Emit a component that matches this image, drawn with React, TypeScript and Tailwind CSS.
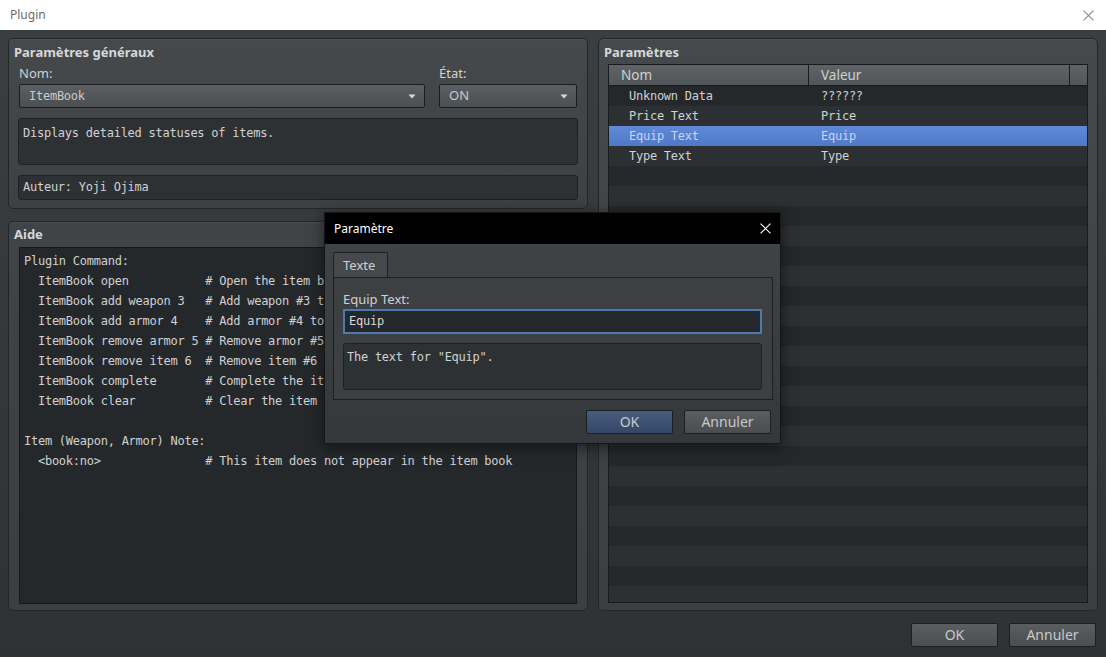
import React from "react";

const mono = "font-['DejaVu_Sans_Mono',monospace] text-[12px] tracking-[-0.25px]";
const sans = "font-['Noto_Sans',sans-serif]";

const ROWS = [
  { name: "Unknown Data", value: "??????" },
  { name: "Price Text", value: "Price" },
  { name: "Equip Text", value: "Equip", selected: true },
  { name: "Type Text", value: "Type" },
];

const HELP = `Plugin Command:
  ItemBook open           # Open the item book screen
  ItemBook add weapon 3   # Add weapon #3 to the item book
  ItemBook add armor 4    # Add armor #4 to the item book
  ItemBook remove armor 5 # Remove armor #5 from the item book
  ItemBook remove item 6  # Remove item #6 from the item book
  ItemBook complete       # Complete the item book
  ItemBook clear          # Clear the item book

Item (Weapon, Armor) Note:
  <book:no>               # This item does not appear in the item book`;

function Caret() {
  return (
    <svg width="8" height="5" viewBox="0 0 8 5" className="shrink-0">
      <path d="M0.5 0.5 L7.5 0.5 L4 4.5 Z" fill="#d8d8d8" />
    </svg>
  );
}

function CloseIcon({ color, size }: { color: string; size: number }) {
  return (
    <svg width={size} height={size} viewBox="0 0 10 10">
      <path d="M0.5 0.5 L9.5 9.5 M9.5 0.5 L0.5 9.5" stroke={color} strokeWidth="1" />
    </svg>
  );
}

function Combo({ children, monoText }: { children: React.ReactNode; monoText?: boolean }) {
  return (
    <div
      className={`mt-[2px] h-[24px] flex items-center justify-between pl-[9px] pr-[8px] rounded-[2px] border border-[#1b1d1f] bg-gradient-to-b from-[#5b5f62] to-[#4b4f52] text-[#c9cacb] ${
        monoText ? mono : `${sans} text-[13px]`
      }`}
    >
      <span>{children}</span>
      <Caret />
    </div>
  );
}

function Button({ label, primary }: { label: string; primary?: boolean }) {
  return (
    <button
      type="button"
      className={`w-[87px] h-[24px] rounded-[2px] border border-[#1c1f22] ${sans} text-[14px] leading-none text-[#c8c9ca] ${
        primary
          ? "bg-gradient-to-b from-[#485c7c] to-[#34476a]"
          : "bg-gradient-to-b from-[#5a5e61] to-[#4a4e51]"
      }`}
    >
      {label}
    </button>
  );
}

export default function App() {
  return (
    <div className={`relative w-[1106px] h-[657px] overflow-hidden flex flex-col ${sans}`}>
      {/* window title bar */}
      <div className="h-[30px] shrink-0 bg-white flex items-center justify-between pl-[10px] pr-[12px]">
        <span className="text-[12px] text-[#6b6b6b]">Plugin</span>
        <CloseIcon color="#8a8a8a" size={11} />
      </div>

      <div className="flex-1 flex flex-col px-[8px] pt-[8px] pb-[10px] bg-gradient-to-b from-[#3a3e41] to-[#2f3235]">
        <div className="h-[573px] flex gap-[10px]">
          <div className="w-[580px] flex flex-col gap-[12px]">
            {/* general params */}
            <section className="h-[171px] rounded-[5px] border border-[#232629] bg-gradient-to-b from-[#45494c] to-[#3d4144] px-[9px] pt-[4px] shadow-[inset_0_1px_0_rgba(255,255,255,0.05)]">
              <h2 className="-ml-[4px] h-[18px] leading-[18px] text-[13px] font-bold text-[#d6d7d8]">
                Paramètres généraux
              </h2>
              <div className="mt-[3px] flex gap-[14px]">
                <div className="w-[406px] ml-[1px]">
                  <div className="h-[18px] leading-[18px] text-[13px] text-[#d0d1d2]">Nom:</div>
                  <Combo monoText>ItemBook</Combo>
                </div>
                <div className="w-[138px]">
                  <div className="h-[18px] leading-[18px] text-[13px] text-[#d0d1d2]">État:</div>
                  <Combo>ON</Combo>
                </div>
              </div>
              <div className={`mt-[10px] h-[47px] rounded-[3px] border border-[#1f2225] bg-[#2e3134] px-[4px] pt-[4px] leading-[20px] text-[#d0d1d2] ${mono}`}>
                Displays detailed statuses of items.
              </div>
              <div className={`mt-[10px] h-[25px] rounded-[3px] border border-[#1f2225] bg-[#2e3134] px-[4px] leading-[23px] text-[#d0d1d2] ${mono}`}>
                Auteur: Yoji Ojima
              </div>
            </section>

            {/* help */}
            <section className="flex-1 flex flex-col rounded-[5px] border border-[#232629] bg-gradient-to-b from-[#404447] to-[#3b3f42] pl-[10px] pr-[10px] pt-[3px] pb-[6px] shadow-[inset_0_1px_0_rgba(255,255,255,0.05)]">
              <h2 className="-ml-[5px] h-[18px] leading-[18px] text-[13px] font-bold text-[#d6d7d8]">Aide</h2>
              <pre className={`mt-[4px] flex-1 overflow-hidden border border-[#16191b] bg-[#25282a] px-[4px] pt-[3px] leading-[20px] text-[#d0d1d2] whitespace-pre ${mono}`}>
                {HELP}
              </pre>
            </section>
          </div>

          {/* parameters */}
          <section className="w-[500px] flex flex-col rounded-[5px] border border-[#232629] bg-gradient-to-b from-[#45494c] to-[#3b3f42] px-[9px] pt-[4px] pb-[7px] shadow-[inset_0_1px_0_rgba(255,255,255,0.05)]">
            <h2 className="-ml-[4px] h-[18px] leading-[18px] text-[13px] font-bold text-[#d6d7d8]">Paramètres</h2>
            <div className="mt-[3px] flex-1 flex flex-col overflow-hidden border border-[#181b1d] bg-[#25282a]">
              <div className="h-[21px] shrink-0 flex border-b border-[#181b1d] bg-gradient-to-b from-[#5f6366] to-[#52565a] text-[13.5px] leading-[20px] text-[#cfd0d1]">
                <div className="w-[200px] pl-[12px] border-r border-[#181b1d]">Nom</div>
                <div className="flex-1 pl-[12px] border-r border-[#181b1d]">Valeur</div>
                <div className="w-[17px]" />
              </div>
              {Array.from({ length: 26 }).map((_, i) => {
                const row = ROWS[i];
                const bg = row?.selected
                  ? "bg-gradient-to-b from-[#6189d8] to-[#4f78c9] text-[#c8d5ee]"
                  : i % 2 === 0
                  ? "bg-[#25282a] text-[#d0d1d2]"
                  : "bg-[#2d3033] text-[#d0d1d2]";
                return (
                  <div key={i} className={`h-[20px] shrink-0 flex leading-[20px] ${mono} ${bg}`}>
                    <div className="w-[200px] pl-[20px]">{row?.name}</div>
                    <div className="flex-1 pl-[12px]">{row?.value}</div>
                  </div>
                );
              })}
            </div>
          </section>
        </div>

        <div className="mt-[12px] flex justify-end gap-[11px] pr-[2px]">
          <Button label="OK" />
          <Button label="Annuler" />
        </div>
      </div>

      {/* parameter dialog */}
      <div className="absolute left-[324px] top-[212px] w-[457px] h-[232px] flex flex-col border border-[#141618] shadow-[0_3px_14px_rgba(0,0,0,0.55)]">
        <div className="h-[31px] shrink-0 bg-black flex items-center justify-between pl-[9px] pr-[9px]">
          <span className="text-[12px] text-white">Paramètre</span>
          <CloseIcon color="#ffffff" size={11} />
        </div>
        <div className="flex-1 flex flex-col pl-[8px] pr-[7px] pt-[8px] bg-gradient-to-b from-[#3f4346] to-[#34383b]">
          <div className="w-[55px] h-[25px] rounded-t-[2px] border border-b-0 border-[#1d2023] bg-[#45494c] pl-[9px] text-[13px] leading-[24px] text-[#d0d1d2]">
            Texte
          </div>
          <div className="h-[123px] border border-[#1d2023] bg-[#3c4043] pl-[9px] pr-[10px] pt-[12px]">
            <div className="h-[18px] leading-[18px] text-[13px] text-[#d0d1d2]">Equip Text:</div>
            <div className={`mt-[1px] h-[25px] border-2 border-[#4c79b0] bg-[#25282a] pl-[4px] leading-[21px] text-[#d8d9da] ${mono}`}>
              Equip
            </div>
            <div className={`mt-[9px] h-[47px] rounded-[3px] border border-[#1f2225] bg-[#2e3134] px-[3px] pt-[3px] leading-[20px] text-[#d0d1d2] ${mono}`}>
              The text for "Equip".
            </div>
          </div>
          <div className="mt-[10px] flex justify-end gap-[11px] pr-[2px]">
            <Button label="OK" primary />
            <Button label="Annuler" />
          </div>
        </div>
      </div>
    </div>
  );
}
